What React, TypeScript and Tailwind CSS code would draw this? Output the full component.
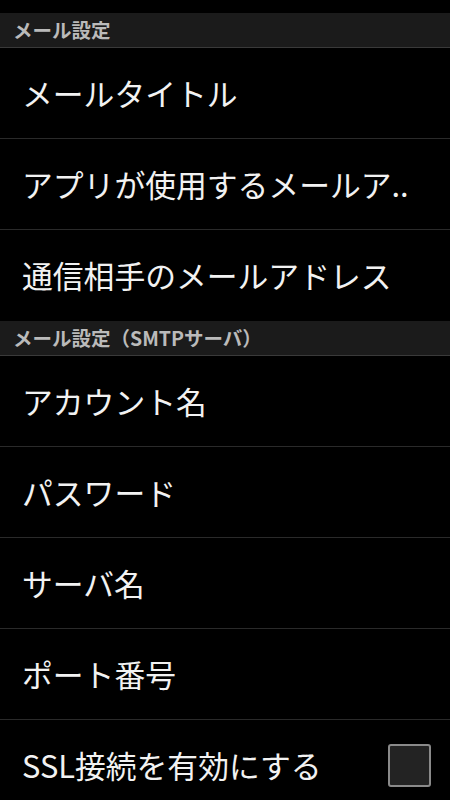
import React from 'react';

type Row = { label: string; checkbox?: boolean };

const sections: { title: string; rows: Row[] }[] = [
    {
        title: 'メール設定',
        rows: [
            { label: 'メールタイトル' },
            { label: 'アプリが使用するメールア..' },
            { label: '通信相手のメールアドレス' },
        ],
    },
    {
        title: 'メール設定（SMTPサーバ）',
        rows: [
            { label: 'アカウント名' },
            { label: 'パスワード' },
            { label: 'サーバ名' },
            { label: 'ポート番号' },
            { label: 'SSL接続を有効にする', checkbox: true },
        ],
    },
];

const App: React.FC = () => {
    return (
        <div
            className="w-[450px] h-[800px] overflow-hidden bg-black pt-[13px]"
            style={{ fontFamily: '"Noto Sans CJK JP", "Noto Sans", sans-serif' }}
        >
            {sections.map((section) => (
                <div key={section.title}>
                    {/* Section header */}
                    <div className="h-[35px] flex items-center px-[13px] bg-[#1b1b1b] border-b border-[#3a3a3a]">
                        <span className="text-[19.5px] font-bold text-[#bababa] leading-none">{section.title}</span>
                    </div>

                    {section.rows.map((row, i) => (
                        <div
                            key={row.label}
                            className={`h-[91px] flex items-center justify-between pl-[22px] pr-[19px] ${
                                i < section.rows.length - 1 ? 'border-b border-[#2a2a2a]' : ''
                            }`}
                        >
                            <span className="text-[30.8px] text-[#f2f2f2] leading-none whitespace-nowrap">{row.label}</span>
                            {row.checkbox && (
                                <div className="w-[43px] h-[43px] rounded-[3px] border-2 border-[#8a8a8a] bg-[#232323]" />
                            )}
                        </div>
                    ))}
                </div>
            ))}
        </div>
    );
};

export default App;
